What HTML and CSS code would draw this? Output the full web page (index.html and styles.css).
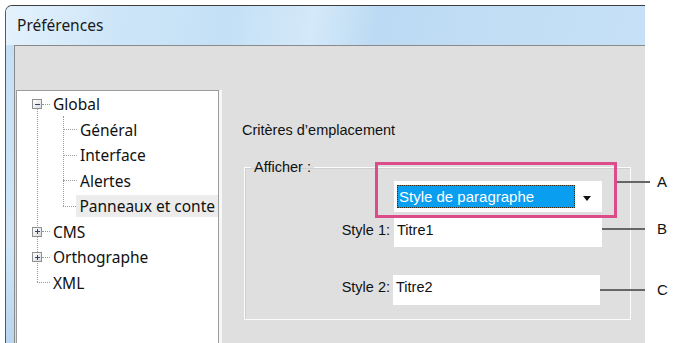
FILE: index.html
```html
<!DOCTYPE html>
<html lang="fr">
    <head>
        <meta charset="utf-8">
        <title>Préférences</title>
        <link rel="stylesheet" href="styles.css">
    </head>
    <body>
        <div class="shot">
            <div class="window">
                <div class="titlebar">Préférences</div>

                <div class="frame">
                    <div class="client">
                        <!-- left: category tree -->
                        <div class="tree">
                            <div class="row top">
                                <span class="exp"><span class="minus"></span></span>
                                <span class="dash short"></span>
                                <span class="lbl">Global</span>
                            </div>
                            <div class="row child"><span class="dash"></span><span class="lbl">Général</span></div>
                            <div class="row child"><span class="dash"></span><span class="lbl">Interface</span></div>
                            <div class="row child"><span class="dash"></span><span class="lbl">Alertes</span></div>
                            <div class="row child"><span class="dash"></span><span class="lbl selected">Panneaux et conte</span></div>
                            <div class="row top">
                                <span class="exp"><span class="minus"></span><span class="vbar"></span></span>
                                <span class="dash short"></span>
                                <span class="lbl">CMS</span>
                            </div>
                            <div class="row top">
                                <span class="exp"><span class="minus"></span><span class="vbar"></span></span>
                                <span class="dash short"></span>
                                <span class="lbl">Orthographe</span>
                            </div>
                            <div class="row leaf"><span class="dash"></span><span class="lbl">XML</span></div>
                        </div>

                        <!-- right: settings -->
                        <div class="settings">
                            <p class="heading">Critères d’emplacement</p>

                            <fieldset class="group">
                                <legend>Afficher :</legend>
                                <div class="form">
                                    <span></span>
                                    <div class="select">
                                        <span class="sel-text">Style de paragraphe</span>
                                        <span class="arrow"></span>
                                    </div>

                                    <label class="lab first">Style 1:</label>
                                    <div class="field first">Titre1</div>

                                    <label class="lab second">Style 2:</label>
                                    <div class="field second">Titre2</div>
                                </div>
                            </fieldset>
                        </div>
                    </div>
                </div>
            </div>

            <!-- annotation overlay -->
            <div class="highlight"></div>
            <div class="callout line-a"></div>
            <div class="callout line-b"></div>
            <div class="callout line-c"></div>
            <span class="letter letter-a">A</span>
            <span class="letter letter-b">B</span>
            <span class="letter letter-c">C</span>
        </div>
    </body>
</html>
```

FILE: styles.css
```css
html, body {
    margin: 0;
    padding: 0;
    background: #ffffff;
}

.shot {
    position: relative;
    width: 676px;
    height: 343px;
    overflow: hidden;
    background: #ffffff;
}

/* window chrome */

.window {
    margin: 5px 0 0 5px;
    width: 640px;
    height: 338px;
    box-sizing: border-box;
    display: flex;
    flex-direction: column;

    border-top: 1px solid #3d3d3d;
    border-left: 1px solid #5a5a5a;
    border-top-left-radius: 7px;
    background: linear-gradient(to bottom, #c3def5, #cfe6f8 70%, #b8d6f0);
    overflow: hidden;
}

.titlebar {
    height: 39px;
    line-height: 39px;
    padding-left: 11px;

    font-family: "Noto Sans", "DejaVu Sans", sans-serif;
    font-size: 15.5px;
    color: #1a1a1a;

    background: linear-gradient(100deg, #e4f2fc 0%, #cde5f8 18%, #c4e0f6 35%, #d4e9f9 48%, #bcdaf3 58%, #c2def5 80%, #c6e1f7 100%);
}

.frame {
    flex: 1;
    display: flex;
    padding-left: 8px;
}

.client {
    flex: 1;
    display: flex;
    padding: 44px 0 0 1px;

    background: #dfdfdf;
    border-top: 1px solid #8a8a8a;
    border-left: 1px solid #8a8a8a;
}

/* tree */

.tree {
    position: relative;
    width: 201px;
    padding-top: 0.25px;
    overflow: hidden;

    background: #ffffff;
    border-top: 1px solid #9b9b9b;
    border-left: 1px solid #9b9b9b;
    border-right: 1px solid #9b9b9b;
    box-shadow: 3px 0 0 #f7f7f7;

    font-family: "Noto Sans", "DejaVu Sans", sans-serif;
    font-size: 15.5px;
    color: #111111;
}

.tree::before {
    content: "";
    position: absolute;
    left: 20px;
    top: 18px;
    height: 173px;
    border-left: 1px dotted #9a9a9a;
}

.tree::after {
    content: "";
    position: absolute;
    left: 46px;
    top: 25px;
    height: 90px;
    border-left: 1px dotted #9a9a9a;
}

.row {
    display: flex;
    align-items: center;
    height: 25.5px;
    white-space: nowrap;
}

.row.top {
    padding-left: 15px;
}

.row.child {
    padding-left: 46px;
}

.row.leaf {
    padding-left: 20px;
}

.exp {
    position: relative;
    z-index: 1;
    width: 8px;
    height: 8px;
    border: 1px solid #8f9091;
    background: linear-gradient(135deg, #ffffff, #dcdcdc);
}

.minus {
    position: absolute;
    left: 2px;
    top: 3.5px;
    width: 5px;
    height: 1px;
    background: #2c4677;
}

.vbar {
    position: absolute;
    left: 4px;
    top: 1.5px;
    width: 1px;
    height: 5px;
    background: #2c4677;
}

.dash {
    width: 14px;
    border-top: 1px dotted #9a9a9a;
}

.dash.short {
    width: 8px;
}

.row.leaf .dash {
    width: 13px;
}

.lbl {
    height: 22px;
    line-height: 22px;
    padding: 0 3px;
}

.lbl.selected {
    flex: 1 0 auto;
    background: #ececec;
}

/* settings pane */

.settings {
    flex: 1;
    padding-left: 23px;

    font-family: "Liberation Sans", Arial, sans-serif;
    font-size: 14.5px;
    color: #111111;
}

.heading {
    margin: 31px 0 0 0;
    line-height: 18px;
}

.group {
    margin: 19px 0 0 2px;
    width: 387px;
    box-sizing: border-box;
    padding: 0 0 11px 0;

    border: 1px solid #fbfbfb;
    box-shadow: inset 1px 1px 0 #cfcfcf;
}

.group legend {
    margin-left: 6px;
    padding: 0 3px;
    line-height: 18px;
}

.form {
    display: grid;
    grid-template-columns: 145px 208px;
    column-gap: 4px;
    margin-top: 5px;
}

.select {
    display: flex;
    align-items: center;
    height: 31px;
    padding-left: 3px;
    box-sizing: border-box;
    background: #ffffff;
}

.sel-text {
    width: 176px;
    height: 23px;
    line-height: 23px;
    padding-left: 2px;

    background: #0a9ef0;
    color: #ffffff;
    font-size: 15px;
    outline: 1px dotted #3a2a10;
    outline-offset: -1px;
}

.arrow {
    margin-left: 8px;
    margin-top: 3px;
    width: 0;
    height: 0;
    border-left: 4px solid transparent;
    border-right: 4px solid transparent;
    border-top: 5px solid #111111;
}

.lab {
    text-align: right;
    padding-top: 3px;
    line-height: 18px;
}

.field {
    height: 29px;
    box-sizing: border-box;
    padding: 3px 0 0 3px;
    line-height: 18px;
    background: #ffffff;
}

.first {
    margin-top: 6px;
}

.second {
    margin-top: 28px;
    height: 30px;
}

.field.second {
    width: 207px;
    margin-left: -1px;
}

/* callouts drawn over the shot */

.highlight {
    position: absolute;
    left: 375px;
    top: 162px;
    width: 242px;
    height: 56px;
    box-sizing: border-box;
    border: 3px solid #dc4b8a;
}

.callout {
    position: absolute;
    height: 2px;
    background: #666666;
}

.line-a {
    left: 617px;
    top: 181px;
    width: 33px;
}

.line-b {
    left: 602px;
    top: 228px;
    width: 43px;
}

.line-c {
    left: 600px;
    top: 289px;
    width: 45px;
}

.letter {
    position: absolute;
    left: 657px;
    font-family: "Liberation Sans", Arial, sans-serif;
    font-size: 15px;
    line-height: 18px;
    color: #111111;
}

.letter-a {
    top: 173px;
}

.letter-b {
    top: 220px;
}

.letter-c {
    top: 281px;
}
```
